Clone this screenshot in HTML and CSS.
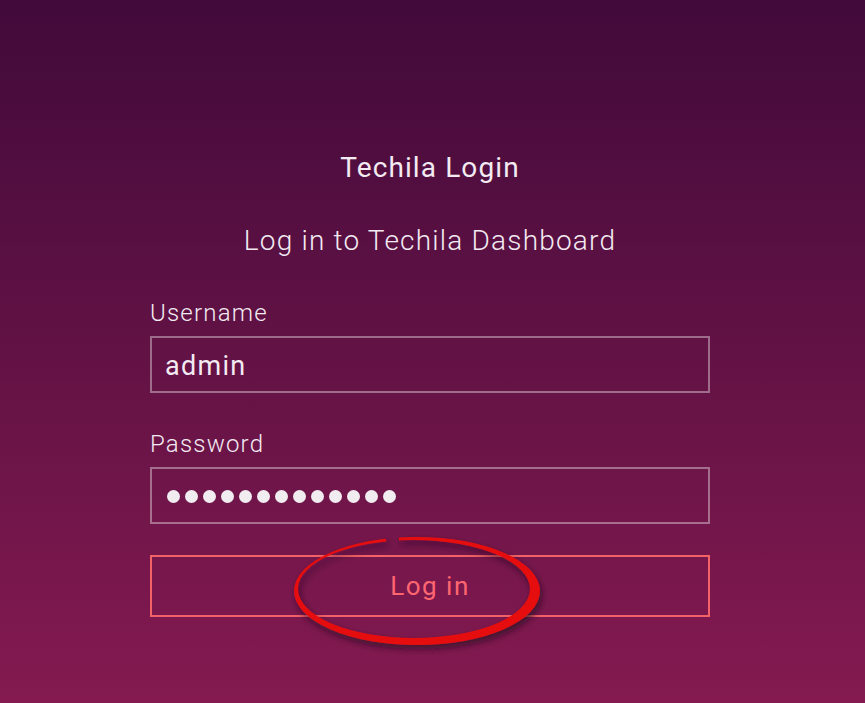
FILE: index.html
```html
<!DOCTYPE html>
<html lang="en">
<head>
<meta charset="utf-8">
<title>Techila Login</title>
<link rel="stylesheet" href="styles.css">
</head>
<body>
<main class="page">
  <div class="panel">
    <h1 class="title">Techila Login</h1>
    <h2 class="subtitle">Log in to Techila Dashboard</h2>
    <form class="form">
      <label class="label">Username</label>
      <div class="field"><span class="value">admin</span></div>
      <label class="label">Password</label>
      <div class="field"><span class="dots"><i></i><i></i><i></i><i></i><i></i><i></i><i></i><i></i><i></i><i></i><i></i><i></i><i></i></span></div>
      <div class="btn-wrap">
        <button type="button" class="btn">Log in</button>
        <svg class="mark" width="300" height="140" viewBox="0 0 300 140">
          <defs>
            <filter id="sh" x="-20%" y="-30%" width="140%" height="170%">
              <feDropShadow dx="2" dy="4" stdDeviation="3" flood-color="#2a0820" flood-opacity="0.75"/>
            </filter>
            <mask id="gap" maskUnits="userSpaceOnUse" x="0" y="0" width="300" height="140">
              <rect x="0" y="0" width="300" height="140" fill="#fff"/>
              <polygon points="119,8 133,8 133,40 121,40" fill="#000"/>
            </mask>
          </defs>
          <g filter="url(#sh)">
            <path mask="url(#gap)" fill="#e51010" fill-rule="evenodd"
              d="M28,76 a123,54 0 1,0 246,0 a123,54 0 1,0 -246,0 Z M32,74 a116,49 0 1,0 232,0 a116,49 0 1,0 -232,0 Z"/>
          </g>
        </svg>
      </div>
    </form>
  </div>
</main>
</body>
</html>
```
FILE: styles.css
```css
* { box-sizing: border-box; }
html, body { margin: 0; height: 100%; }
body {
  background: linear-gradient(180deg, #410a3a 0%, #841a50 100%);
  font-family: Roboto, "Noto Sans", sans-serif;
  color: #f3eaf2;
  overflow: hidden;
}
.page {
  display: flex;
  justify-content: center;
  padding: 150px 5px 0 0;
}
.panel { width: 560px; }
.title {
  margin: 0;
  text-align: center;
  font-size: 28px;
  font-weight: 400;
  letter-spacing: 1.1px;
  line-height: 36px;
}
.subtitle {
  margin: 37px 0 0;
  text-align: center;
  font-size: 28px;
  font-weight: 300;
  letter-spacing: 1.2px;
  line-height: 36px;
}
.form { display: flex; flex-direction: column; margin-top: 39px; }
.label {
  font-size: 24px;
  font-weight: 300;
  letter-spacing: 1.2px;
  line-height: 30px;
  margin: 36px 0 8px;
}
.label:first-child { margin-top: 0; }
.field {
  height: 57px;
  border: 2px solid rgba(255, 255, 255, 0.38);
  display: flex;
  align-items: center;
  padding: 2px 13px 0;
}
.value { font-size: 27px; font-weight: 400; letter-spacing: 1.3px; }
.dots { display: flex; gap: 5px; padding-left: 2px; }
.dots i {
  display: block;
  width: 13px;
  height: 13px;
  border-radius: 50%;
  background: #f1ecf0;
}
.btn-wrap { position: relative; margin-top: 31px; }
.btn {
  display: block;
  width: 100%;
  height: 62px;
  background: transparent;
  border: 2px solid #f26266;
  color: #ff6670;
  font-family: inherit;
  font-size: 26px;
  font-weight: 400;
  letter-spacing: 1.5px;
  cursor: pointer;
}
.mark {
  position: absolute;
  left: 116px;
  top: -40px;
  pointer-events: none;
}
```
